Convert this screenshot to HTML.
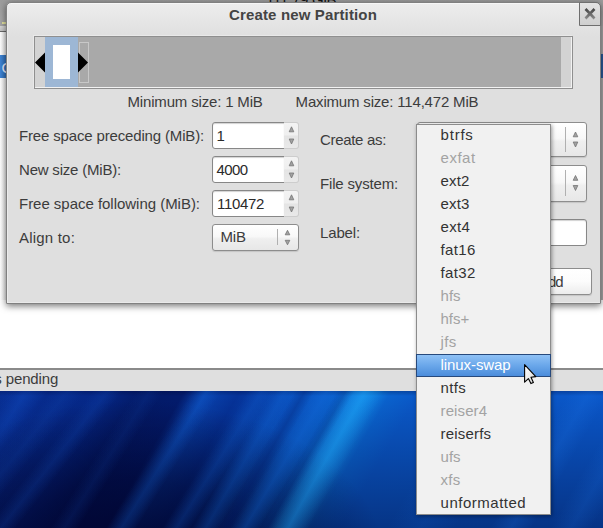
<!DOCTYPE html>
<html><head><meta charset="utf-8"><title>Create new Partition</title>
<style>
html,body{margin:0;padding:0}
body{width:603px;height:528px;overflow:hidden;position:relative;background:#fff;font:15px/18px "Liberation Sans",sans-serif;color:#3c3c3c}
div,span,svg{position:absolute;box-sizing:border-box}
.t{white-space:pre;line-height:18px;font-size:15px}
/* background app window */
#topgray{left:0;top:0;width:603px;height:27px;background:linear-gradient(#9c9c9c,#a8a8a8)}
#lstrip1{left:0;top:26px;width:8px;height:6px;background:linear-gradient(#d8d8d8,#c4c4c4);border-bottom:1px solid #6a6a6a}
#lwhite{left:0;top:32px;width:8px;height:340px;background:linear-gradient(90deg,#fff 0,#f6f6f6 3px,#e2e2e2 7px)}
#lblue{left:0;top:55px;width:8px;height:23px;background:linear-gradient(90deg,#3f86d6,#2f6bb4)}
#rstrip{left:598px;top:26px;width:5px;height:274px;background:#acacac}
#rblue{left:598px;top:54px;width:5px;height:24px;background:#2a5b9c}
#white{left:0;top:300px;width:603px;height:69px;background:#fff}
#status{left:0;top:368px;width:603px;height:23px;background:#dfdfdf;border-top:2px solid #8a8a8a}
#wall{left:0;top:391px;width:603px;height:137px;background:#04277a}
/* dialog */
#dlg{left:6px;top:2px;width:595px;height:302px;background:linear-gradient(#ededed 0,#dfdfdf 34px,#dfdfdf 100%);border:1px solid #808080;border-radius:5px 5px 0 0;box-shadow:0 2px 7px rgba(0,0,0,.55),inset 0 1px 0 #f6f6f6,inset 1px 0 0 #ececec,inset 0 -1px 0 #e9e9e9}
#close{left:579px;top:2px;width:22px;height:24px;background:linear-gradient(#e2e2e2,#cfcfcf);border:1px solid #6e6e6e;border-radius:0 5px 0 0}
/* graph */
#frame{left:34px;top:36px;width:539px;height:53px;border:1px solid #8f8f8f;background:#a9a9a9;box-shadow:inset -1px -1px 0 #f2f2f2,-1px -1px 0 #e9e9e9}
#g1{left:35px;top:37px;width:10px;height:50px;background:#d3d3d3}
#g2{left:45px;top:37px;width:33px;height:50px;background:#9db7d5}
#g3{left:53px;top:45px;width:17px;height:34px;background:#fff}
#g4{left:79px;top:42px;width:10px;height:41px;border:1px solid #c8c8c8}
#g5{left:561px;top:37px;width:10px;height:50px;background:#d3d3d3}
.spin{left:212px;width:73px;height:27px;border:1px solid #878787;border-radius:3px 0 0 3px;background:#fff;box-shadow:inset 0 1px 1px rgba(0,0,0,.18)}
.spb{left:284px;width:15px;height:27px;border:1px solid #cdcdcd;border-left:0;border-radius:0 3px 3px 0;background:linear-gradient(#f3f3f3 0,#efefef 48%,#e4e4e4 52%,#e9e9e9)}
.combo{border:1px solid #8d8d8d;border-radius:3px;background:linear-gradient(#fff,#f8f8f8 46%,#efefef 56%,#e7e7e7);box-shadow:0 1px 1px rgba(0,0,0,.12)}
.sep{width:1px;background:#b0b0b0}
.entry{border:1px solid #878787;border-radius:3px;background:#fff;box-shadow:inset 0 1px 1px rgba(0,0,0,.18)}
.btn{border:1px solid #8d8d8d;border-radius:3px;background:linear-gradient(#fff 0,#fcfcfc 50%,#ececec 100%);box-shadow:0 1px 1px rgba(0,0,0,.12)}
#menu{left:416px;top:124px;width:135px;height:391px;background:#f1f1f1;border:1px solid #8c8c8c;box-shadow:1px 1px 4px rgba(0,0,0,.4)}
#sel{left:416px;top:354px;width:135px;height:23px;background:linear-gradient(#8fc1f6 0,#6aa7ea 50%,#4b8cdb 100%);border:1px solid #27497c}
.m{color:#333}
.d{color:#a3a3a3}
.s{color:#fff}
#wall{background:linear-gradient(130deg,rgba(20,80,190,0) -19.8px,rgba(20,80,190,0.16) -3.8px,rgba(20,80,190,0) 12.2px),
linear-gradient(130deg,rgba(20,80,190,0) 9.0px,rgba(20,80,190,0.12) 23.0px,rgba(20,80,190,0) 37.0px),
linear-gradient(129deg,rgba(20,80,190,0) 38.8px,rgba(20,80,190,0.2) 52.8px,rgba(20,80,190,0) 66.8px),
linear-gradient(128deg,rgba(20,80,190,0) 73.1px,rgba(20,80,190,0.22) 85.1px,rgba(20,80,190,0) 97.1px),
linear-gradient(122deg,rgba(20,80,190,0) 115.2px,rgba(20,80,190,0.16) 127.2px,rgba(20,80,190,0) 139.2px),
linear-gradient(122deg,rgba(20,100,215,0) 162.5px,rgba(20,100,215,0.26) 175.5px,rgba(20,100,215,0) 188.5px),
linear-gradient(122deg,rgba(20,100,215,0) 210.2px,rgba(20,100,215,0.24) 222.2px,rgba(20,100,215,0) 234.2px),
linear-gradient(120deg,rgba(20,110,225,0) 234.8px,rgba(20,110,225,0.24) 246.8px,rgba(20,110,225,0) 258.8px),
linear-gradient(120deg,rgba(0,15,90,0) 255.1px,rgba(0,15,90,0.26) 264.1px,rgba(0,15,90,0) 273.1px),
linear-gradient(121deg,rgba(20,110,225,0) 267.3px,rgba(20,110,225,0.3) 280.3px,rgba(20,110,225,0) 293.3px),
linear-gradient(120deg,rgba(0,15,90,0) 291.6px,rgba(0,15,90,0.2) 299.6px,rgba(0,15,90,0) 307.6px),
linear-gradient(119deg,rgba(30,150,240,0) 300.4px,rgba(30,150,240,0.42) 318.4px,rgba(30,150,240,0) 336.4px),
linear-gradient(120deg,rgba(20,110,230,0) 403.0px,rgba(20,110,230,0.12) 433.0px,rgba(20,110,230,0) 463.0px),
linear-gradient(120deg,rgba(30,120,235,0) 493.0px,rgba(30,120,235,0.2) 511.0px,rgba(30,120,235,0) 529.0px),
linear-gradient(120deg,rgba(30,120,235,0) 544.9px,rgba(30,120,235,0.16) 562.9px,rgba(30,120,235,0) 580.9px),
radial-gradient(ellipse 250px 160px at 135px 170px,rgba(0,2,40,.8),rgba(0,2,40,.5) 50%,rgba(0,2,40,0)),
linear-gradient(180deg,rgba(0,0,35,.25) 0,rgba(0,0,35,0) 5px,rgba(0,0,35,.4) 100%),
linear-gradient(120deg,#062a8c 0px,#0a38a4 22px,#062a8c 43px,#052888 87px,#031a68 126px,#031b6c 160px,#0943ae 179px,#053298 208px,#0a53c2 260px,#0a60cc 294px,#1290ea 317px,#0a62ce 339px,#0a58c8 364px,#0a55c8 606px)}
</style></head><body>
<div id="topgray"></div><div style="left:2px;top:22px;width:4px;height:2px;background:#e4e4a0"></div><div id="lstrip1"></div><div id="lwhite"></div><div id="lblue"></div><div id="rstrip"></div><div id="rblue"></div>
<div id="white"></div><div id="status"></div><div id="wall"></div>
<span class="t" style="left:1.5px;top:58.5px;color:#eef;">C</span>
<span class="t" style="left:266px;top:-9px;color:#111;letter-spacing:-.25px">111.79 GiB</span>
<div id="dlg"></div><div id="close"></div>
<svg style="left:583px;top:6px" width="14" height="15" viewBox="0 0 14 15"><defs><linearGradient id="xg" x1="0" y1="0" x2="0" y2="1"><stop offset="0" stop-color="#474747"/><stop offset="1" stop-color="#8a8a8a"/></linearGradient></defs><path d="M2.5 3 L11.5 12.5 M11.5 3 L2.5 12.5" stroke="url(#xg)" stroke-width="2.6" fill="none" gradientUnits="userSpaceOnUse"/></svg>
<div id="frame"></div><div id="g1"></div><div id="g2"></div><div id="g3"></div><div id="g4"></div><div id="g5"></div>
<svg style="left:34px;top:50px" width="56" height="26" viewBox="0 0 56 26"><path d="M1 12.5 L11 2.5 L11 22.5 Z M54 12.5 L44 2.5 L44 22.5 Z" fill="#000"/></svg>
<div class="spin" style="top:122px"></div><div class="spb" style="top:122px"></div>
<div class="spin" style="top:156px"></div><div class="spb" style="top:156px"></div>
<div class="spin" style="top:190px"></div><div class="spb" style="top:190px"></div>
<div class="combo" style="left:212px;top:224px;width:87px;height:27px"></div><div class="sep" style="left:277px;top:229px;height:16px"></div>
<div class="combo" style="left:417px;top:122px;width:170px;height:35px"></div><div class="sep" style="left:565px;top:127px;height:25px"></div>
<div class="combo" style="left:417px;top:165px;width:170px;height:37px"></div><div class="sep" style="left:565px;top:170px;height:26px"></div>
<div class="entry" style="left:417px;top:219px;width:170px;height:27px"></div>
<div class="btn" style="left:500px;top:268px;width:92px;height:27px"></div>
<svg style="left:0;top:0" width="603" height="300" viewBox="0 0 603 300"><polygon points="289.2,131.8 293.8,131.8 291.5,126.8" fill="#a2a2a2" stroke="#747474" stroke-width=".8" stroke-linejoin="round"/><polygon points="289.2,139 293.8,139 291.5,144" fill="#a2a2a2" stroke="#747474" stroke-width=".8" stroke-linejoin="round"/><polygon points="289.2,165.8 293.8,165.8 291.5,160.8" fill="#a2a2a2" stroke="#747474" stroke-width=".8" stroke-linejoin="round"/><polygon points="289.2,173 293.8,173 291.5,178" fill="#a2a2a2" stroke="#747474" stroke-width=".8" stroke-linejoin="round"/><polygon points="289.2,199.8 293.8,199.8 291.5,194.8" fill="#a2a2a2" stroke="#747474" stroke-width=".8" stroke-linejoin="round"/><polygon points="289.2,207 293.8,207 291.5,212" fill="#a2a2a2" stroke="#747474" stroke-width=".8" stroke-linejoin="round"/><polygon points="285.2,234.8 289.8,234.8 287.5,230.3" fill="#a2a2a2" stroke="#747474" stroke-width=".8" stroke-linejoin="round"/><polygon points="285.2,240.3 289.8,240.3 287.5,244.8" fill="#a2a2a2" stroke="#747474" stroke-width=".8" stroke-linejoin="round"/><polygon points="573.2,136.8 577.8,136.8 575.5,132" fill="#a2a2a2" stroke="#747474" stroke-width=".8" stroke-linejoin="round"/><polygon points="573.2,142 577.8,142 575.5,147" fill="#a2a2a2" stroke="#747474" stroke-width=".8" stroke-linejoin="round"/><polygon points="573.2,180.3 577.8,180.3 575.5,175.5" fill="#a2a2a2" stroke="#747474" stroke-width=".8" stroke-linejoin="round"/><polygon points="573.2,185.5 577.8,185.5 575.5,190.5" fill="#a2a2a2" stroke="#747474" stroke-width=".8" stroke-linejoin="round"/></svg>
<span class="t" style="left:229px;top:5.7px;letter-spacing:0.148px;font-weight:bold;color:#444">Create new Partition</span>
<span class="t" style="left:127.5px;top:93.2px;letter-spacing:-0.166px;">Minimum size: 1 MiB</span>
<span class="t" style="left:295.6px;top:93.2px;letter-spacing:-0.180px;">Maximum size: 114,472 MiB</span>
<span class="t" style="left:19px;top:126.7px;letter-spacing:-0.157px;">Free space preceding (MiB):</span>
<span class="t" style="left:19px;top:160.7px;letter-spacing:-0.201px;">New size (MiB):</span>
<span class="t" style="left:19px;top:194.7px;letter-spacing:-0.027px;">Free space following (MiB):</span>
<span class="t" style="left:19px;top:228.7px;letter-spacing:0.200px;">Align to:</span>
<span class="t" style="left:216.5px;top:126.7px;color:#2a2a2a">1</span>
<span class="t" style="left:216.6px;top:160.7px;letter-spacing:-0.594px;color:#2a2a2a">4000</span>
<span class="t" style="left:217px;top:194.7px;letter-spacing:-0.326px;color:#2a2a2a">110472</span>
<span class="t" style="left:220.5px;top:228.2px;letter-spacing:-0.181px;">MiB</span>
<span class="t" style="left:320px;top:130.7px;letter-spacing:-0.320px;">Create as:</span>
<span class="t" style="left:320px;top:174.7px;letter-spacing:-0.168px;">File system:</span>
<span class="t" style="left:320px;top:223.7px;letter-spacing:-0.146px;">Label:</span>
<span class="t" style="left:-5.7px;top:370.0px;letter-spacing:-0.129px;">s pending</span>
<span class="t" style="left:539px;top:272.7px;letter-spacing:-1.068px;">Add</span>
<div id="menu"></div><div id="sel"></div>
<span class="t m" style="left:440.6px;top:126.4px;letter-spacing:0.762px;">btrfs</span>
<span class="t d" style="left:440.6px;top:149.4px;letter-spacing:0.494px;">exfat</span>
<span class="t m" style="left:440.6px;top:172.4px;letter-spacing:0.160px;">ext2</span>
<span class="t m" style="left:440.6px;top:195.4px;letter-spacing:0.160px;">ext3</span>
<span class="t m" style="left:440.6px;top:218.4px;letter-spacing:0.285px;">ext4</span>
<span class="t m" style="left:440.6px;top:241.4px;letter-spacing:0.325px;">fat16</span>
<span class="t m" style="left:440.6px;top:264.4px;letter-spacing:0.325px;">fat32</span>
<span class="t d" style="left:440.6px;top:287.4px;letter-spacing:-0.005px;">hfs</span>
<span class="t d" style="left:440.6px;top:310.4px;letter-spacing:-0.070px;">hfs+</span>
<span class="t d" style="left:440.6px;top:333.4px;letter-spacing:0.333px;">jfs</span>
<span class="t s" style="left:440.6px;top:356.4px;letter-spacing:-0.087px;">linux-swap</span>
<span class="t m" style="left:440.6px;top:379.4px;letter-spacing:0.328px;">ntfs</span>
<span class="t d" style="left:440.6px;top:402.4px;letter-spacing:0.092px;">reiser4</span>
<span class="t m" style="left:440.6px;top:425.4px;letter-spacing:0.189px;">reiserfs</span>
<span class="t d" style="left:440.6px;top:448.4px;letter-spacing:-0.005px;">ufs</span>
<span class="t d" style="left:440.6px;top:471.4px;letter-spacing:0.276px;">xfs</span>
<span class="t m" style="left:440.6px;top:494.4px;letter-spacing:0.505px;">unformatted</span>
<svg style="left:520px;top:360px" width="20" height="28" viewBox="520 360 20 28"><defs><linearGradient id="cg" x1="0" y1="0" x2="1" y2="1"><stop offset="0" stop-color="#fff"/><stop offset="1" stop-color="#d8d8d8"/></linearGradient></defs><path d="M524.6 364.6 L524.6 382.2 L528.4 378.6 L530.9 383.6 L533.4 382.4 L531 377.2 L535.8 376.6 Z" fill="url(#cg)" stroke="#000" stroke-width="1.1" stroke-linejoin="round"/></svg>
</body></html>
